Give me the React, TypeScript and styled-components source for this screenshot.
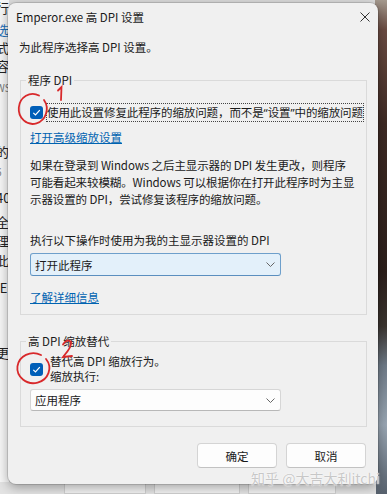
import styled, { createGlobalStyle } from "styled-components";

const GlobalStyle = createGlobalStyle`
  html, body {
    margin: 0;
    padding: 0;
  }
  body {
    font-family: "Noto Sans CJK SC", "Noto Sans", sans-serif;
    color: #1a1a1a;
  }
`;

const behindRows = [
  { text: "行", h: 22 },
  { text: "选", h: 18, link: true },
  { text: "式", h: 18 },
  { text: "容", h: 22 },
  { text: "WS", h: 64, dim: true },
  { text: "的", h: 20 },
  { text: "6", h: 26, dim: true },
  { text: "40", h: 24 },
  { text: "全", h: 19 },
  { text: "理", h: 20 },
  { text: "此", h: 27 },
  { text: "IE", h: 65 },
  { text: "更", h: 20 },
];

const paraLines = [
  "如果在登录到 Windows 之后主显示器的 DPI 发生更改，则程序",
  "可能看起来较模糊。Windows 可以根据你在打开此程序时为主显",
  "示器设置的 DPI，尝试修复该程序的缩放问题。",
];

const App = () => {
  return (
    <>
      <GlobalStyle />
      <Desktop>
        <BehindWindow>
          {behindRows.map((r, i) => (
            <BehindRow key={i} $h={r.h} $link={r.link} $dim={r.dim}>
              {r.text}
            </BehindRow>
          ))}
        </BehindWindow>
        <Photo />
        <BottomStrip>
          <StripButton $w={80} />
          <StripButton $w={84} />
          <StripButton $w={86} />
        </BottomStrip>

        <Dialog>
          <TitleBar>
            <Title>Emperor.exe 高 DPI 设置</Title>
            <CloseIcon viewBox="0 0 10 10">
              <path d="M0.5 0.5 L9.5 9.5 M9.5 0.5 L0.5 9.5" />
            </CloseIcon>
          </TitleBar>

          <Body>
            <Intro>为此程序选择高 DPI 设置。</Intro>

            <Group $top={17} $pt={15} $pb={9}>
              <Legend>程序 DPI</Legend>
              <CheckRow>
                <Check />
                <FocusLabel>
                  使用此设置修复此程序的缩放问题，而不是<Quote>“</Quote>设置<Quote>”</Quote>中的缩放问题
                </FocusLabel>
              </CheckRow>
              <Link $top={7}>打开高级缩放设置</Link>
              <Para>
                {paraLines.map((l, i) => (
                  <ParaLine key={i}>{l}</ParaLine>
                ))}
              </Para>
              <FieldLabel>执行以下操作时使用为我的主显示器设置的 DPI</FieldLabel>
              <Select $focused $h={23} $top={5}>
                <span>打开此程序</span>
                <Chevron />
              </Select>
              <Link $top={13}>了解详细信息</Link>
            </Group>

            <Group $top={18} $pt={5} $pb={15}>
              <Legend>高 DPI 缩放替代</Legend>
              <CheckRow>
                <Check />
                <TwoLine>
                  替代高 DPI 缩放行为。
                  <br />
                  缩放执行:
                </TwoLine>
              </CheckRow>
              <Select $h={22} $top={5}>
                <span>应用程序</span>
                <Chevron />
              </Select>
            </Group>

            <Footer>
              <Button>确定</Button>
              <Button>取消</Button>
            </Footer>
          </Body>
        </Dialog>

        <Watermark>知乎 @大吉大利itchi</Watermark>

        <Annotations viewBox="0 0 387 494">
          <path d="M44 100 A14 15 0 1 1 39 95.5" />
          <path d="M58 90.5 L61.5 87 L61 100" />
          <path d="M46 359 A16 15 0 1 1 41 355" />
          <path d="M63 344.5 Q67 338 71 342 Q72.5 346 63 357 L72 356" />
        </Annotations>
      </Desktop>
    </>
  );
};

export default App;

const Chevron = () => (
  <ChevronSvg viewBox="0 0 9 5">
    <path d="M0.5 0.5 L4.5 4.5 L8.5 0.5" />
  </ChevronSvg>
);

const Check = () => (
  <CheckBox>
    <svg viewBox="0 0 13 13" width="13" height="13">
      <path d="M3.3 6.8 L5.5 9 L9.8 4.2" />
    </svg>
  </CheckBox>
);

const Desktop = styled.div`
  position: relative;
  width: 387px;
  height: 494px;
  overflow: hidden;
  background: #dcdcdc;
`;

const BehindWindow = styled.div`
  position: absolute;
  left: 0;
  top: 0;
  width: 9px;
  height: 484px;
  background: #f7f7f7;
  overflow: hidden;
  display: flex;
  flex-direction: column;
`;

const BehindRow = styled.div<{ $h: number; $link?: boolean; $dim?: boolean }>`
  height: ${(p) => p.$h}px;
  margin-left: -4px;
  font-size: ${(p) => (p.$dim ? 10 : 13)}px;
  line-height: 16px;
  white-space: nowrap;
  color: ${(p) => (p.$link ? "#1d6fb8" : p.$dim ? "#777" : "#222")};
`;

const Photo = styled.div`
  position: absolute;
  right: 0;
  top: 0;
  width: 12px;
  height: 494px;
  background: linear-gradient(
    180deg,
    #a59a8f 0%,
    #6b4c42 6%,
    #3e2a24 25%,
    #2c1f1b 55%,
    #3b3530 66%,
    #6f7b88 74%,
    #9aa7b4 86%,
    #57616d 100%
  );
`;

const BottomStrip = styled.div`
  position: absolute;
  left: 0;
  bottom: 0;
  width: 376px;
  height: 12px;
  display: flex;
  gap: 8px;
  padding-left: 64px;
  box-sizing: border-box;
  background: #e3e3e3;
`;

const StripButton = styled.div<{ $w: number }>`
  width: ${(p) => p.$w}px;
  background: #f2f2f2;
  border: 1px solid #cfcfcf;
`;

const Dialog = styled.div`
  position: absolute;
  left: 8px;
  top: 3px;
  width: 370px;
  height: 481px;
  background: #f0f0f0;
  border-radius: 8px;
  box-shadow: 0 0 0 1px rgba(0, 0, 0, 0.12), 0 3px 12px rgba(0, 0, 0, 0.35);
  display: flex;
  flex-direction: column;
  font-size: 11.5px;
`;

const TitleBar = styled.div`
  height: 26px;
  display: flex;
  align-items: center;
  justify-content: space-between;
  padding: 0 8px;
`;

const Title = styled.div`
  font-size: 11.5px;
  padding-top: 2px;
  color: #1a1a1a;
`;

const CloseIcon = styled.svg`
  width: 10px;
  height: 10px;
  margin-top: 2px;
  fill: none;
  stroke: #333;
  stroke-width: 1;
`;

const Body = styled.div`
  padding: 0 11px;
  display: flex;
  flex-direction: column;
`;

const Intro = styled.div`
  margin-top: 10px;
  line-height: 16px;
`;

const Group = styled.fieldset<{ $top: number; $pt: number; $pb: number }>`
  margin: ${(p) => p.$top}px 0 0 1px;
  padding: ${(p) => p.$pt}px 9px ${(p) => p.$pb}px 9px;
  border: 1px solid #dadada;
  min-width: 0;
  display: flex;
  flex-direction: column;
  align-items: flex-start;
`;

const Legend = styled.legend`
  margin-left: -4px;
  padding: 0 2px;
  line-height: 16px;
  color: #1a1a1a;
`;

const CheckRow = styled.div`
  display: flex;
  align-items: center;
  gap: 3px;
`;

const CheckBox = styled.div`
  width: 13px;
  height: 13px;
  border-radius: 3px;
  background: #005fb8;
  flex: none;
  display: flex;

  svg {
    fill: none;
    stroke: #fff;
    stroke-width: 1.2;
  }
`;

const FocusLabel = styled.div`
  border: 1px dotted #444;
  line-height: 16px;
  white-space: nowrap;
  letter-spacing: -0.1px;
`;

const Quote = styled.span`
  font-family: "Noto Sans", sans-serif;
`;

const TwoLine = styled.div`
  line-height: 15px;
  padding-left: 4px;
`;

const Link = styled.div<{ $top: number }>`
  margin-top: ${(p) => p.$top}px;
  line-height: 16px;
  color: #0063b1;
  text-decoration: underline;
`;

const Para = styled.div`
  margin-top: 12px;
  display: flex;
  flex-direction: column;
`;

const ParaLine = styled.div`
  line-height: 17px;
  white-space: nowrap;
  letter-spacing: -0.1px;
`;

const FieldLabel = styled.div`
  margin-top: 24px;
  line-height: 16px;
`;

const Select = styled.div<{ $focused?: boolean; $h: number; $top: number }>`
  margin-top: ${(p) => p.$top}px;
  width: 251px;
  height: ${(p) => p.$h}px;
  box-sizing: border-box;
  display: flex;
  align-items: center;
  justify-content: space-between;
  padding: 0 5px 0 4px;
  border-radius: 3px;
  background: ${(p) => (p.$focused ? "#e3f0fa" : "#fdfdfd")};
  border: 1px solid ${(p) => (p.$focused ? "#6e9fcb" : "#d6d6d6")};
  border-bottom-color: ${(p) => (p.$focused ? "#5b8fbf" : "#b8b8b8")};
  font-size: 11.5px;
`;

const ChevronSvg = styled.svg`
  width: 9px;
  height: 5px;
  fill: none;
  stroke: #666;
  stroke-width: 1;
`;

const Footer = styled.div`
  margin-top: 16px;
  display: flex;
  justify-content: flex-end;
  gap: 9px;
  padding-right: 1px;
`;

const Button = styled.div`
  width: 80px;
  height: 25px;
  box-sizing: border-box;
  display: flex;
  align-items: center;
  justify-content: center;
  background: #fdfdfd;
  border: 1px solid #d4d4d4;
  border-bottom-color: #c2c2c2;
  border-radius: 4px;
  font-size: 11.5px;
`;

const Watermark = styled.div`
  position: absolute;
  left: 251px;
  top: 469px;
  font-size: 14px;
  line-height: 18px;
  color: rgba(190, 190, 190, 0.85);
  text-shadow: 0 0 1px rgba(255, 255, 255, 0.9), 0 0 2px rgba(255, 255, 255, 0.8);
  white-space: nowrap;
  pointer-events: none;
`;

const Annotations = styled.svg`
  position: absolute;
  left: 0;
  top: 0;
  width: 387px;
  height: 494px;
  pointer-events: none;
  fill: none;
  stroke: #d8292b;
  stroke-width: 1.8;
  stroke-linecap: round;
`;
